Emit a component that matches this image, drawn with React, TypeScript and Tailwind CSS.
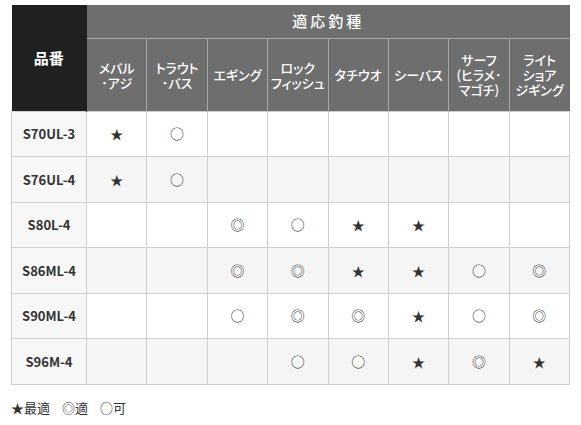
import React from 'react';

const species = [
  ['メバル', '･アジ'],
  ['トラウト', '･バス'],
  ['エギング'],
  ['ロック', 'フィッシュ'],
  ['タチウオ'],
  ['シーバス'],
  ['サーフ', '(ヒラメ･', 'マゴチ)'],
  ['ライト', 'ショア', 'ジギング'],
];

const rows: [string, string[]][] = [
  ['S70UL-3', ['★', '○', '', '', '', '', '', '']],
  ['S76UL-4', ['★', '○', '', '', '', '', '', '']],
  ['S80L-4', ['', '', '◎', '○', '★', '★', '', '']],
  ['S86ML-4', ['', '', '◎', '◎', '★', '★', '○', '◎']],
  ['S90ML-4', ['', '', '○', '◎', '◎', '★', '○', '◎']],
  ['S96M-4', ['', '', '', '○', '○', '★', '◎', '★']],
];

export default function App() {
  return (
    <div className="w-[581px] h-[425px] bg-white pt-[5px] pl-[11px] font-['Noto_Sans_CJK_JP','Noto_Sans',sans-serif] text-[#333]">
      <table className="w-[559px] table-fixed border-collapse">
        <colgroup>
          <col className="w-[75px]" />
          {species.map((_, i) => (
            <col key={i} />
          ))}
        </colgroup>
        <thead>
          <tr className="h-[33px]">
            <th
              rowSpan={2}
              className="bg-[#202020] text-white text-[15px] font-bold border-r border-[#202020]"
            >
              品番
            </th>
            <th
              colSpan={8}
              className="bg-[#6e6e6e] text-white text-[15px] font-medium tracking-[3px] border-b border-[#a9a9a9]"
            >
              適応釣種
            </th>
          </tr>
          <tr className="h-[73px]">
            {species.map((lines, i) => (
              <th
                key={i}
                className="bg-[#6e6e6e] text-white text-[13px] font-medium leading-[15px] [font-feature-settings:'palt'] border-l border-[#a9a9a9] first:border-l-0 px-0 whitespace-nowrap"
              >
                {lines.map((l, j) => (
                  <div key={j}>{l}</div>
                ))}
              </th>
            ))}
          </tr>
        </thead>
        <tbody>
          {rows.map(([name, marks], r) => (
            <tr key={name} className={`h-[45.5px] ${r % 2 === 1 ? 'bg-[#f5f5f5]' : 'bg-white'}`}>
              <td className="bg-[#f7f7f7] border border-[#cfcfcf] text-center text-[13px] font-bold">
                {name}
              </td>
              {marks.map((m, i) => (
                <td
                  key={i}
                  className={`border border-[#cfcfcf] text-center text-[#333] ${m === '★' ? 'text-[13px]' : 'text-[14px]'}`}
                >
                  {m}
                </td>
              ))}
            </tr>
          ))}
        </tbody>
      </table>
      <div className="mt-[13px] flex gap-[12px] text-[13px] text-[#333] [font-feature-settings:'palt']">
        <span>★最適</span>
        <span>◎適</span>
        <span>○可</span>
      </div>
    </div>
  );
}
